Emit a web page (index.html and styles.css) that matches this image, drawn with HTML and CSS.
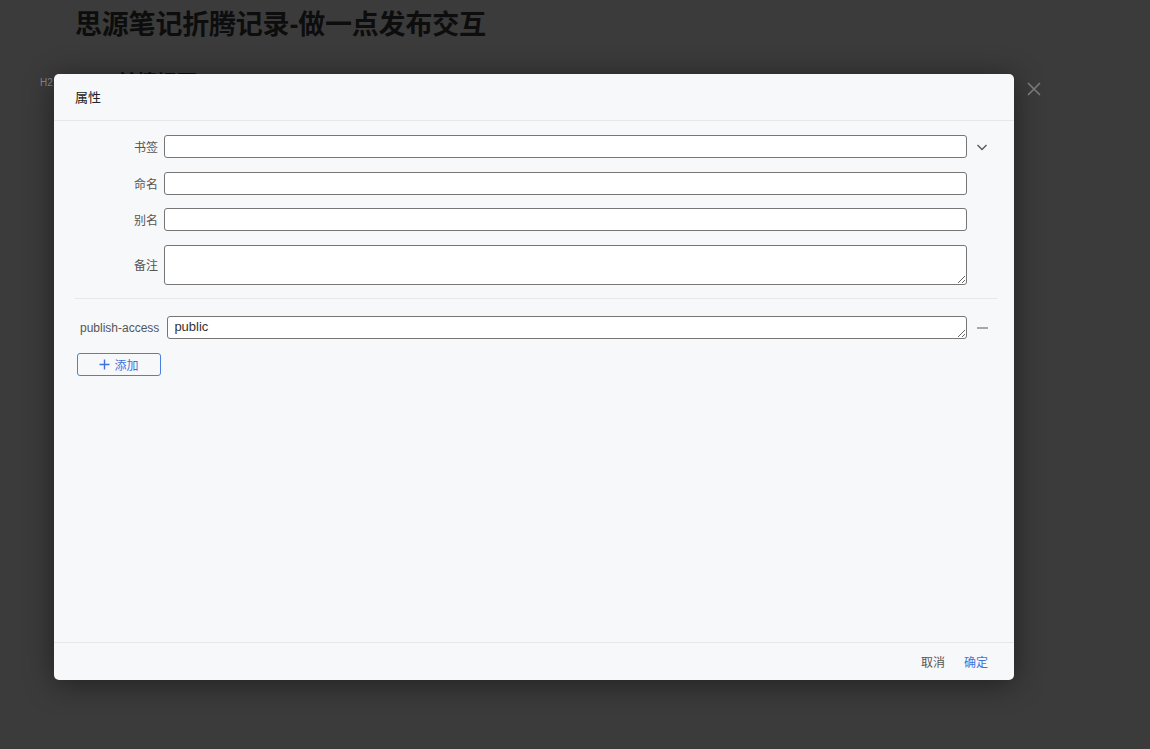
FILE: index.html
```html
<!DOCTYPE html>
<html lang="zh">
<head>
    <meta charset="UTF-8">
    <title>思源笔记折腾记录-做一点发布交互</title>
    <link rel="stylesheet" href="styles.css">
</head>
<body>

    <div class="page">
        <h1 class="doc-title">思源笔记折腾记录-做一点发布交互</h1>
        <div class="doc-block">
            <span class="block-tag">H2</span>
            <h2 class="doc-h2">前情提要</h2>
        </div>
    </div>

    <div class="overlay">
        <div class="dialog">
            <div class="dialog-header">属性</div>

            <div class="dialog-body">
                <div class="attr-row">
                    <label class="attr-label">书签</label>
                    <input type="text" class="attr-input">
                    <span class="attr-action">
                        <svg width="14" height="14" viewBox="0 0 14 14"><path d="M2.5 5 L7 9.5 L11.5 5" fill="none" stroke="#5a5a5a" stroke-width="1.4"/></svg>
                    </span>
                </div>
                <div class="attr-row">
                    <label class="attr-label">命名</label>
                    <input type="text" class="attr-input">
                    <span class="attr-action"></span>
                </div>
                <div class="attr-row">
                    <label class="attr-label">别名</label>
                    <input type="text" class="attr-input">
                    <span class="attr-action"></span>
                </div>
                <div class="attr-row">
                    <label class="attr-label">备注</label>
                    <textarea class="attr-input attr-memo"></textarea>
                    <span class="attr-action"></span>
                </div>

                <div class="divider"></div>

                <div class="custom-row">
                    <label class="custom-label">publish-access</label>
                    <textarea class="attr-input custom-input" rows="1">public</textarea>
                    <span class="attr-action">
                        <svg width="14" height="14" viewBox="0 0 14 14"><path d="M2 7 H13" stroke="#666" stroke-width="1.1"/></svg>
                    </span>
                </div>

                <button class="add-btn">
                    <svg width="11" height="11" viewBox="0 0 11 11"><path d="M5.5 0.5 V10.5 M0.5 5.5 H10.5" stroke="#3d72dc" stroke-width="1.4"/></svg>
                    添加
                </button>
            </div>

            <div class="dialog-footer">
                <button class="text-btn">取消</button>
                <button class="text-btn primary">确定</button>
            </div>
        </div>

        <span class="close-btn">
            <svg width="16" height="16" viewBox="0 0 16 16"><path d="M2 2 L14 14 M14 2 L2 14" stroke="#7a7a7a" stroke-width="1.6"/></svg>
        </span>
    </div>

</body>
</html>
```

FILE: styles.css
```css
body {
    margin: 0;
    background-color: #3b3b3b;
    font-family: "Liberation Sans", "Noto Sans CJK SC", sans-serif;
    width: 1150px;
    height: 749px;
    overflow: hidden;
}
.page {
    padding: 7px 0 0 75px;
}
.doc-title {
    margin: 0;
    font-size: 27px;
    font-weight: bold;
    color: #0d0d0d;
    line-height: 36px;
    letter-spacing: -0.2px;
}
.doc-block {
    position: relative;
    margin-top: 26px;
    padding-left: 42px;
}
.block-tag {
    position: absolute;
    left: -35px;
    top: 8px;
    font-size: 10px;
    color: #888;
}
.doc-h2 {
    margin: 0;
    font-size: 20px;
    color: #0d0d0d;
    line-height: 28px;
}
.overlay {
    position: absolute;
    left: 0;
    top: 0;
    width: 1150px;
    height: 749px;
}
.dialog {
    position: absolute;
    left: 54px;
    top: 74px;
    width: 960px;
    height: 606px;
    background-color: #f7f8fa;
    border-radius: 5px;
    box-shadow: 0 4px 30px rgba(0, 0, 0, 0.45);
    display: flex;
    flex-direction: column;
}
.dialog-header {
    height: 46px;
    line-height: 48px;
    padding-left: 21px;
    font-size: 13px;
    color: #222;
    border-bottom: 1px solid #e6e7ea;
}
.dialog-body {
    flex: 1;
    padding: 14px 17px 0 21px;
}
.attr-row {
    display: flex;
    align-items: center;
    margin-bottom: 13.5px;
}
.attr-label {
    width: 89px;
    text-align: right;
    font-size: 12px;
    color: #555;
    padding-right: 6px;
    box-sizing: border-box;
}
.attr-input {
    flex: 1;
    height: 23px;
    box-sizing: border-box;
    border: 1px solid #767676;
    border-radius: 3px;
    background: #fff;
    font-family: "Liberation Sans", "Noto Sans CJK SC", sans-serif;
    font-size: 13px;
    color: #333;
    padding: 2px 6px;
    margin: 0;
}
.attr-memo {
    height: 40px;
}
.attr-action {
    width: 30px;
    display: flex;
    justify-content: center;
    align-items: center;
}
.divider {
    height: 1px;
    background-color: #e6e7ea;
    margin: 0 0 17px;
}
.custom-row {
    display: flex;
    align-items: center;
    padding-left: 5px;
}
.custom-label {
    font-size: 12px;
    color: #555;
    margin-right: 8px;
}
.custom-input {
    resize: vertical;
    line-height: 17px;
    padding: 1px 6px;
    overflow: hidden;
}
.add-btn {
    margin: 14px 0 0 2px;
    width: 84px;
    height: 23px;
    border: 1px solid #4a7fe2;
    border-radius: 3px;
    background: #fff0;
    color: #3d72dc;
    font-family: "Liberation Sans", "Noto Sans CJK SC", sans-serif;
    font-size: 12px;
    display: flex;
    align-items: center;
    justify-content: center;
    gap: 4px;
    cursor: pointer;
}
.dialog-footer {
    height: 37px;
    border-top: 1px solid #e6e7ea;
    display: flex;
    justify-content: flex-end;
    align-items: center;
    gap: 19px;
    padding-right: 26px;
}
.text-btn {
    border: none;
    background: none;
    padding: 0;
    font-family: "Liberation Sans", "Noto Sans CJK SC", sans-serif;
    font-size: 12px;
    color: #555;
    cursor: pointer;
}
.text-btn.primary {
    color: #3d72dc;
}
.close-btn {
    position: absolute;
    left: 1026px;
    top: 81px;
    width: 16px;
    height: 16px;
    display: flex;
}
```
